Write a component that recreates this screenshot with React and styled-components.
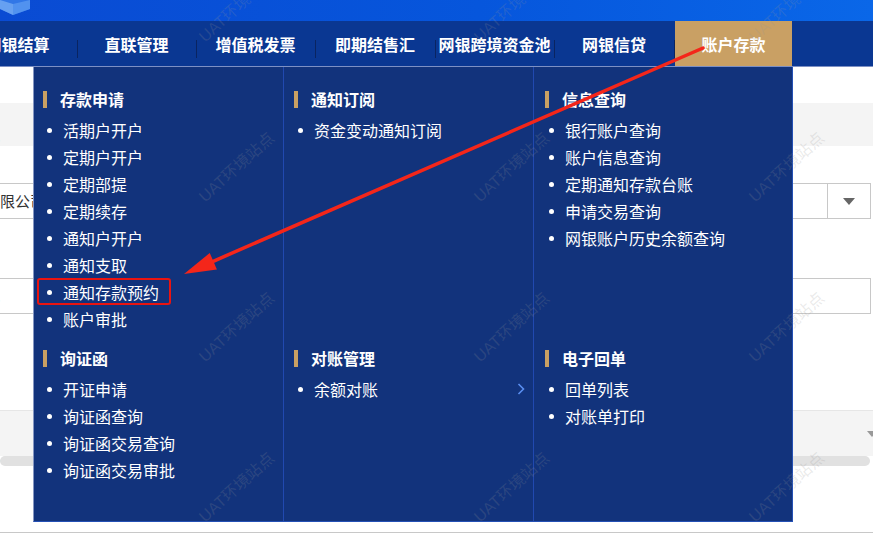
import React from "react";
import styled, { createGlobalStyle, css } from "styled-components";

const GlobalStyle = createGlobalStyle`
  html, body { margin: 0; padding: 0; background: #fff; }
  body { font-family: "Noto Sans CJK SC", "Noto Sans", sans-serif; }
  * { box-sizing: border-box; }
  ul { margin: 0; padding: 0; list-style: none; }
`;

const Page = styled.div`
  position: relative;
  width: 873px;
  height: 556px;
  overflow: hidden;
  background: #fff;
`;

const TopBar = styled.header`
  height: 21px;
  display: flex;
  align-items: flex-start;
  background: linear-gradient(90deg, #0a4bd3 0%, #0656dc 55%, #0a67e8 100%);
`;

const NavBar = styled.nav`
  height: 46px;
  display: flex;
  background: #0a3792;
  border-bottom: 1px solid #7d90c4;
  overflow: hidden;
`;

const NavList = styled.ul`
  display: flex;
  margin-left: -42px;
`;

const NavItem = styled.li`
  position: relative;
  width: ${(p) => p.$w}px;
  height: 45px;
  display: flex;
  align-items: center;
  justify-content: center;
  color: #fff;
  font-size: 16px;
  font-weight: 700;
  white-space: nowrap;
  &::before {
    content: "";
    position: absolute;
    left: 0;
    top: 19px;
    width: 1px;
    height: 18px;
    background: #0a2461;
  }
  ${(p) =>
    p.$active &&
    css`
      padding-left: 1px;
      background: #c9a064;
      background-clip: content-box;
    `}
`;

const Content = styled.main`
  display: flex;
  flex-direction: column;
`;

const Spacer = styled.div`
  height: ${(p) => p.$h}px;
  flex: none;
`;

const GrayBand = styled.div`
  height: ${(p) => p.$h}px;
  background: #f4f4f4;
  border-top: ${(p) => (p.$bordered ? "1px solid #e6e6e6" : "none")};
  display: flex;
  align-items: center;
  justify-content: flex-end;
`;

const SortMark = styled.span`
  width: 0;
  height: 0;
  margin-right: -4px;
  border-left: 5px solid transparent;
  border-right: 5px solid transparent;
  border-top: 6px solid #999;
`;

const FieldRow = styled.div`
  height: 36px;
  width: 871px;
  display: flex;
  align-items: stretch;
  border: 1px solid #c8c8c8;
  border-left: none;
  background: #fff;
`;

const FieldText = styled.span`
  flex: 1;
  overflow: hidden;
  white-space: nowrap;
  font-size: 15px;
  line-height: 34px;
  color: #333;
  text-indent: -15px;
`;

const SelectButton = styled.span`
  width: 43px;
  border-left: 1px solid #c8c8c8;
  display: flex;
  align-items: center;
  justify-content: center;
  &::after {
    content: "";
    border-left: 6px solid transparent;
    border-right: 6px solid transparent;
    border-top: 7px solid #666;
  }
`;

const ScrollTrack = styled.div`
  height: 10px;
  width: 870px;
  border-radius: 5px;
  background: #e1e1e1;
`;

const BottomRule = styled.div`
  height: 1px;
  background: #c8c8c8;
`;

const MegaMenu = styled.div`
  position: absolute;
  left: 33px;
  top: 67px;
  width: 760px;
  height: 455px;
  background: #12337c;
  border-left: 1px solid #8596c2;
  border-right: 1px solid #2450b5;
  border-bottom: 1px solid #2450b5;
  display: grid;
  grid-template-columns: 249px 250px 1fr;
  grid-template-rows: auto 1fr;
`;

const Section = styled.section`
  padding: ${(p) => (p.$first ? "22px" : "16px")} 8px 0 ${(p) => p.$pad}px;
  border-left: ${(p) => (p.$divider ? "1px solid #2149b0" : "none")};
`;

const SectionTitle = styled.h3`
  margin: 0 0 7px;
  height: 20px;
  display: flex;
  align-items: center;
  gap: 13px;
  color: #fff;
  font-size: 16px;
  font-weight: 700;
  &::before {
    content: "";
    width: 4px;
    height: 17px;
    background: #c9a063;
  }
`;

const Item = styled.li`
  position: relative;
  height: 27px;
  display: flex;
  align-items: center;
  width: ${(p) => (p.$sub ? "100%" : "max-content")};
  color: #fff;
  font-size: 16px;
  white-space: nowrap;
  &::before {
    content: "";
    width: 5px;
    height: 5px;
    border-radius: 50%;
    background: #fff;
    margin: 2px 11px 0 4px;
  }
  ${(p) =>
    p.$marked &&
    css`
      &::after {
        content: "";
        position: absolute;
        top: 0;
        bottom: 0;
        left: -6px;
        right: -12px;
        border: 2px solid #ea1410;
        border-radius: 3px;
      }
    `}
`;

const Chevron = styled.svg`
  margin-left: auto;
`;

const Overlay = styled.svg`
  position: absolute;
  left: 0;
  top: 0;
  pointer-events: none;
`;

const WatermarkLayer = styled.div`
  position: absolute;
  inset: 0;
  pointer-events: none;
  display: grid;
  grid-template-columns: repeat(4, 275px);
  grid-auto-rows: 160px;
  margin: -74px 0 0 -177px;
`;

const Watermark = styled.span`
  display: flex;
  align-items: center;
  justify-content: center;
  font-family: "Liberation Sans", "Noto Sans CJK SC", sans-serif;
  font-size: 16px;
  color: rgba(150, 150, 150, 0.2);
  transform: rotate(-42deg);
  white-space: nowrap;
`;

const navItems = [
  { label: "网银结算", w: 119 },
  { label: "直联管理", w: 119 },
  { label: "增值税发票", w: 119 },
  { label: "即期结售汇", w: 120 },
  { label: "网银跨境资金池", w: 119 },
  { label: "网银信贷", w: 120 },
  { label: "账户存款", w: 118, active: true },
];

const menu = [
  [
    {
      title: "存款申请",
      items: ["活期户开户", "定期户开户", "定期部提", "定期续存", "通知户开户", "通知支取", { label: "通知存款预约", marked: true }, "账户审批"],
    },
    { title: "询证函", items: ["开证申请", "询证函查询", "询证函交易查询", "询证函交易审批"] },
  ],
  [
    { title: "通知订阅", items: ["资金变动通知订阅"] },
    { title: "对账管理", items: [{ label: "余额对账", sub: true }] },
  ],
  [
    { title: "信息查询", items: ["银行账户查询", "账户信息查询", "定期通知存款台账", "申请交易查询", "网银账户历史余额查询"] },
    { title: "电子回单", items: ["回单列表", "对账单打印"] },
  ],
];

const colPad = [9, 10, 11];

function renderSection(sec, colIdx, first) {
  return (
    <Section
      key={`${colIdx}-${first ? 0 : 1}`}
      $first={first}
      $pad={colPad[colIdx]}
      $divider={colIdx > 0}
      style={{ gridColumn: colIdx + 1, gridRow: first ? 1 : 2 }}
    >
      <SectionTitle>{sec.title}</SectionTitle>
      <ul>
        {sec.items.map((it) => {
          const o = typeof it === "string" ? { label: it } : it;
          return (
            <Item key={o.label} $marked={o.marked} $sub={o.sub}>
              {o.label}
              {o.sub && (
                <Chevron width="8" height="12" viewBox="0 0 8 12">
                  <polyline points="1.5,1 6.5,6 1.5,11" fill="none" stroke="#5a8ff0" strokeWidth="1.6" />
                </Chevron>
              )}
            </Item>
          );
        })}
      </ul>
    </Section>
  );
}

export default function App() {
  const tail = [703, 48];
  const tip = [184, 274];
  const dx = tip[0] - tail[0];
  const dy = tip[1] - tail[1];
  const len = Math.hypot(dx, dy);
  const ux = dx / len;
  const uy = dy / len;
  const hl = 32;
  const hw = 9;
  const bx = tip[0] - ux * hl;
  const by = tip[1] - uy * hl;
  const head = `${tip[0]},${tip[1]} ${bx - uy * hw},${by + ux * hw} ${bx + uy * hw},${by - ux * hw}`;

  return (
    <>
      <GlobalStyle />
      <Page>
        <TopBar>
          <svg width="32" height="17" viewBox="0 0 32 17">
            <polygon points="0,0 30,0 30,9 13,15 0,9" fill="#3f86ee" opacity="0.75" />
            <polygon points="0,0 13,4 13,15 0,9" fill="#74aaf4" opacity="0.8" />
            <polygon points="13,4 30,0 30,9 13,15" fill="#5a98f1" opacity="0.8" />
          </svg>
        </TopBar>
        <NavBar>
          <NavList>
            {navItems.map((n) => (
              <NavItem key={n.label} $w={n.w} $active={n.active}>
                {n.label}
              </NavItem>
            ))}
          </NavList>
        </NavBar>
        <Content>
          <Spacer $h={36} />
          <GrayBand $h={43} />
          <Spacer $h={37} />
          <FieldRow>
            <FieldText>有限公司</FieldText>
            <SelectButton />
          </FieldRow>
          <Spacer $h={59} />
          <FieldRow>
            <FieldText />
          </FieldRow>
          <Spacer $h={96} />
          <GrayBand $h={46} $bordered>
            <SortMark />
          </GrayBand>
          <ScrollTrack />
          <Spacer $h={66} />
          <BottomRule />
        </Content>

        <MegaMenu>
          {menu.map((col, ci) => [renderSection(col[0], ci, true), renderSection(col[1], ci, false)])}
        </MegaMenu>

        <Overlay width="873" height="556" viewBox="0 0 873 556">
          <line x1={tail[0]} y1={tail[1]} x2={bx + ux * 2} y2={by + uy * 2} stroke="#f4261a" strokeWidth="3.5" strokeLinecap="round" />
          <polygon points={head} fill="#f4261a" />
        </Overlay>

        <WatermarkLayer>
          {Array.from({ length: 16 }).map((_, i) => (
            <Watermark key={i}>UAT环境站点</Watermark>
          ))}
        </WatermarkLayer>
      </Page>
    </>
  );
}
